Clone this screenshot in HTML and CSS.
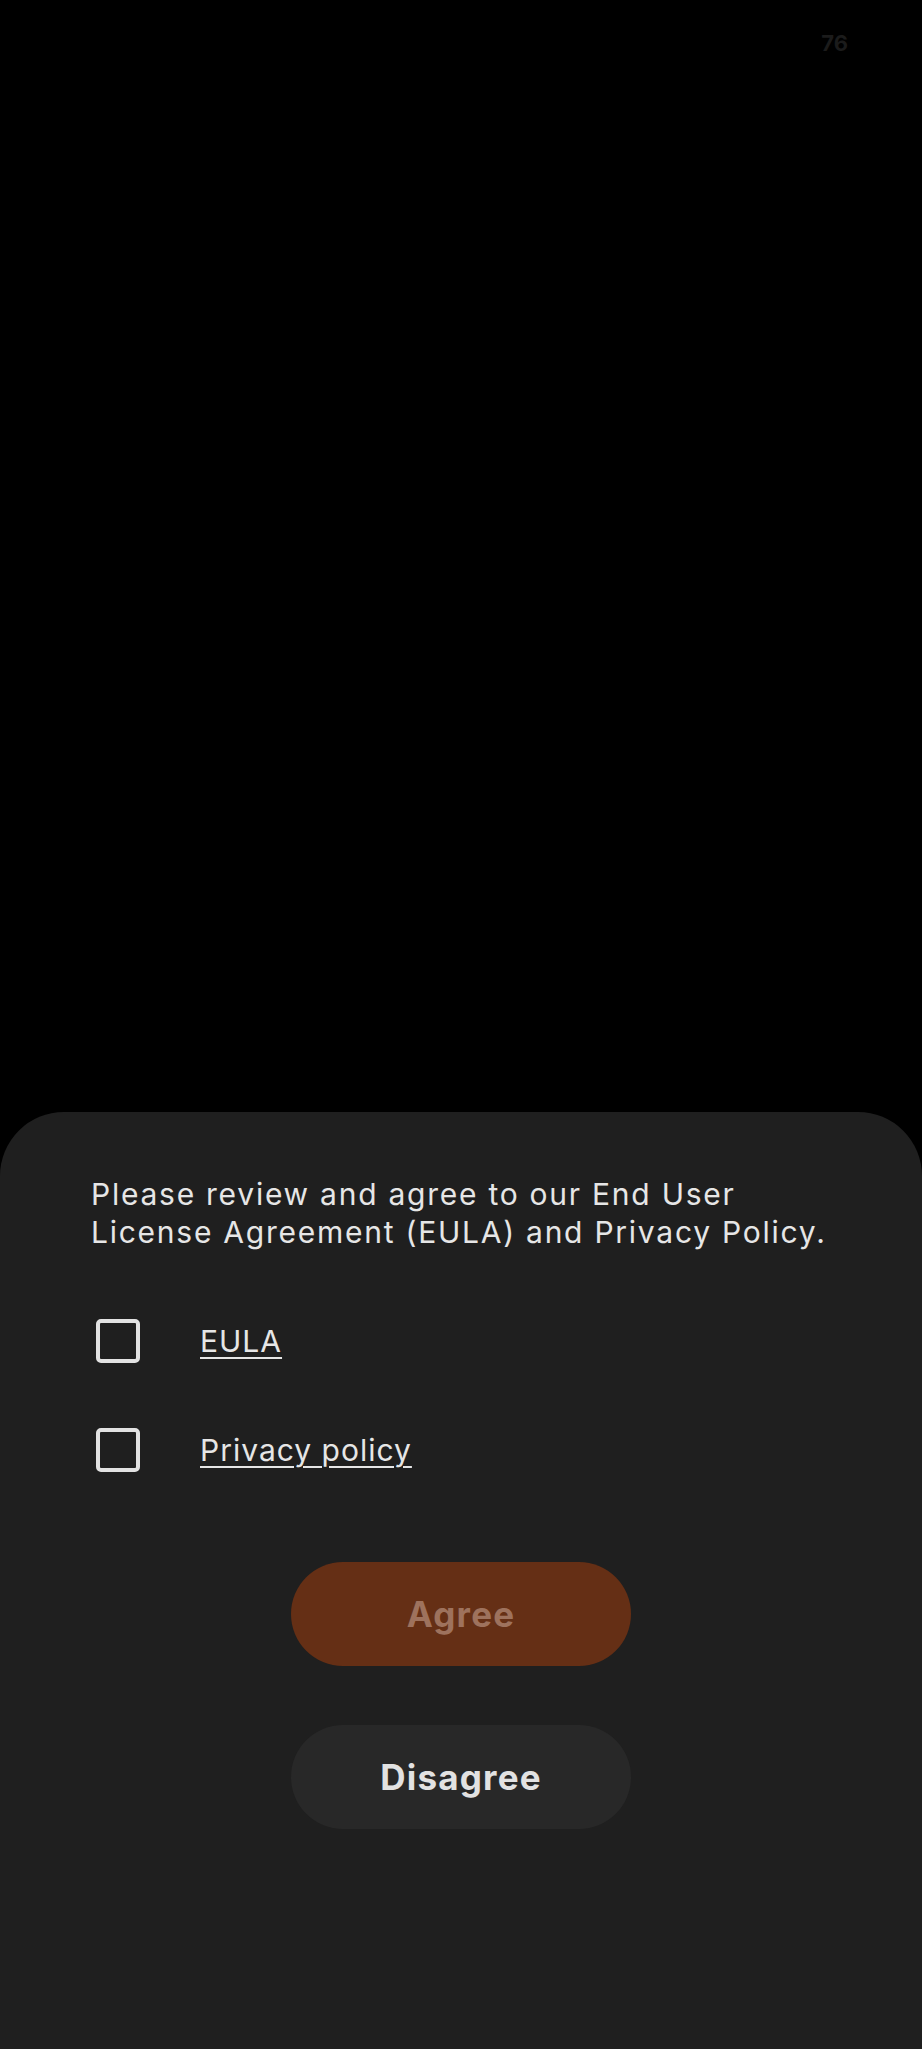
FILE: index.html
```html
<!DOCTYPE html>
<html>
<head>
	<title>Agreement</title>
	<meta charset="utf-8">
	<link rel="stylesheet" href="styles.css">
</head>
<body>
	<div id="screen">
		<div class="status">
			<span class="battery">76</span>
		</div>
		<div class="spacer"></div>
		<!--sheet start-->
		<div class="sheet">
			<p class="intro">Please review and agree to our End User<br>License Agreement (EULA) and Privacy Policy.</p>
			<ul class="checks">
				<li><span class="box"></span><a href="#">EULA</a></li>
				<li><span class="box"></span><a href="#">Privacy policy</a></li>
			</ul>
			<div class="btns">
				<div class="btn agree">Agree</div>
				<div class="btn disagree">Disagree</div>
			</div>
		</div>
		<!--end sheet-->
	</div>
</body>
</html>
```

FILE: styles.css
```css
*{margin:0;padding:0;box-sizing:border-box;}
body{background:#000;font-family:"Inter","Noto Sans",sans-serif;color:#e4e4e4;}
#screen{height:2049px;display:flex;flex-direction:column;}
.status{height:80px;display:flex;justify-content:flex-end;padding:30px 74px 0 0;}
.status .battery{font-size:22px;font-weight:700;color:#1b1b1b;line-height:26px;}
.spacer{flex:1;}
/*sheet start*/
.sheet{height:937px;background:#1f1f1f;border-radius:64px 64px 0 0;padding:63px 91px 0 91px;}
.sheet .intro{font-size:30px;line-height:38px;letter-spacing:1.75px;color:#e6e6e6;white-space:nowrap;}
.sheet .checks{list-style:none;margin-top:68px;padding-left:5px;display:flex;flex-direction:column;gap:65px;}
.sheet .checks li{display:flex;align-items:center;height:44px;}
.sheet .checks .box{width:44px;height:44px;border:4px solid #e2e2e2;border-radius:5px;margin-right:60px;}
.sheet .checks a{color:#e6e6e6;font-size:30px;letter-spacing:1px;text-decoration:underline;text-underline-offset:5px;text-decoration-thickness:2px;}
.sheet .btns{display:flex;flex-direction:column;align-items:center;gap:59px;margin-top:90px;}
.sheet .btn{width:340px;height:104px;border-radius:52px;display:flex;align-items:center;justify-content:center;font-size:35px;font-weight:700;letter-spacing:1.2px;}
.sheet .btn.agree{background:#652f15;color:#9e725d;}
.sheet .btn.disagree{background:#282828;color:#e2e2e2;}
/*end sheet*/
```
